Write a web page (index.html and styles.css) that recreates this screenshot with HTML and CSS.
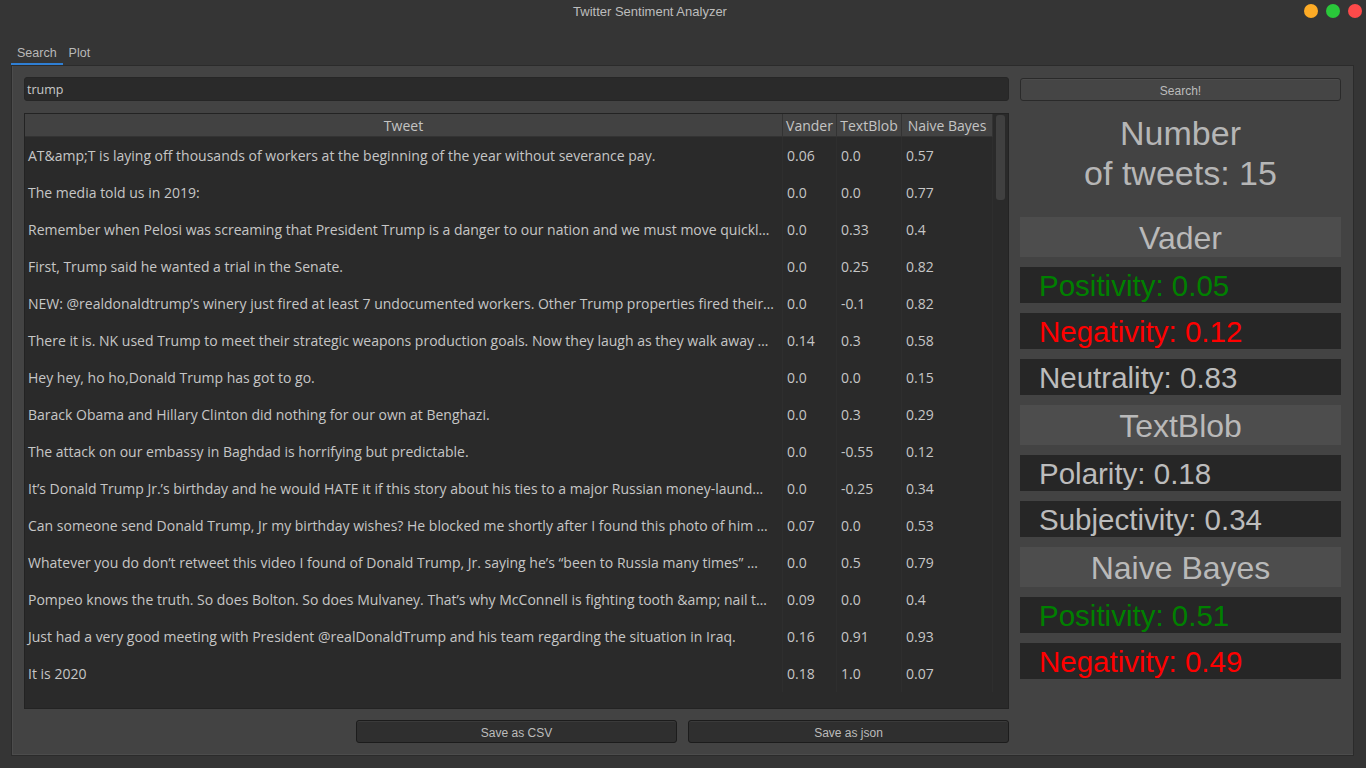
FILE: index.html
```html
<!DOCTYPE html>
<html>
<head>
<meta charset="utf-8">
<title>Twitter Sentiment Analyzer</title>
<link rel="stylesheet" href="styles.css">
</head>
<body>
<div class="window">
  <div class="titlebar">
    <div class="title">Twitter Sentiment Analyzer</div>
    <div class="lights">
      <span class="light yellow"></span>
      <span class="light green"></span>
      <span class="light red"></span>
    </div>
  </div>
  <div class="tabs">
    <div class="tab active">Search</div>
    <div class="tab">Plot</div>
  </div>
  <div class="pane">
    <div class="search-input">trump</div>
    <div class="btn search-btn">Search!</div>

    <div class="table">
      <div class="grid">
        <div class="row head">
          <div class="cell">Tweet</div>
          <div class="cell">Vander</div>
          <div class="cell">TextBlob</div>
          <div class="cell">Naive Bayes</div>
        </div>
        <div class="row"><div class="cell">AT&amp;amp;T is laying off thousands of workers at the beginning of the year without severance pay.</div><div class="cell">0.06</div><div class="cell">0.0</div><div class="cell">0.57</div></div>
        <div class="row"><div class="cell">The media told us in 2019:</div><div class="cell">0.0</div><div class="cell">0.0</div><div class="cell">0.77</div></div>
        <div class="row"><div class="cell">Remember when Pelosi was screaming that President Trump is a danger to our nation and we must move quickl…</div><div class="cell">0.0</div><div class="cell">0.33</div><div class="cell">0.4</div></div>
        <div class="row"><div class="cell">First, Trump said he wanted a trial in the Senate.</div><div class="cell">0.0</div><div class="cell">0.25</div><div class="cell">0.82</div></div>
        <div class="row"><div class="cell">NEW: @realdonaldtrump’s winery just fired at least 7 undocumented workers. Other Trump properties fired their…</div><div class="cell">0.0</div><div class="cell">-0.1</div><div class="cell">0.82</div></div>
        <div class="row"><div class="cell">There it is. NK used Trump to meet their strategic weapons production goals. Now they laugh as they walk away …</div><div class="cell">0.14</div><div class="cell">0.3</div><div class="cell">0.58</div></div>
        <div class="row"><div class="cell">Hey hey, ho ho,Donald Trump has got to go.</div><div class="cell">0.0</div><div class="cell">0.0</div><div class="cell">0.15</div></div>
        <div class="row"><div class="cell">Barack Obama and Hillary Clinton did nothing for our own at Benghazi.</div><div class="cell">0.0</div><div class="cell">0.3</div><div class="cell">0.29</div></div>
        <div class="row"><div class="cell">The attack on our embassy in Baghdad is horrifying but predictable.</div><div class="cell">0.0</div><div class="cell">-0.55</div><div class="cell">0.12</div></div>
        <div class="row"><div class="cell">It’s Donald Trump Jr.’s birthday and he would HATE it if this story about his ties to a major Russian money-laund…</div><div class="cell">0.0</div><div class="cell">-0.25</div><div class="cell">0.34</div></div>
        <div class="row"><div class="cell">Can someone send Donald Trump, Jr my birthday wishes? He blocked me shortly after I found this photo of him …</div><div class="cell">0.07</div><div class="cell">0.0</div><div class="cell">0.53</div></div>
        <div class="row"><div class="cell">Whatever you do don’t retweet this video I found of Donald Trump, Jr. saying he’s “been to Russia many times” …</div><div class="cell">0.0</div><div class="cell">0.5</div><div class="cell">0.79</div></div>
        <div class="row"><div class="cell">Pompeo knows the truth. So does Bolton. So does Mulvaney. That’s why McConnell is fighting tooth &amp;amp; nail t…</div><div class="cell">0.09</div><div class="cell">0.0</div><div class="cell">0.4</div></div>
        <div class="row"><div class="cell">Just had a very good meeting with President @realDonaldTrump and his team regarding the situation in Iraq.</div><div class="cell">0.16</div><div class="cell">0.91</div><div class="cell">0.93</div></div>
        <div class="row"><div class="cell">It is 2020</div><div class="cell">0.18</div><div class="cell">1.0</div><div class="cell">0.07</div></div>
      </div>
      <div class="vscroll"><div class="thumb"></div></div>
    </div>

    <div class="stats">
      <div class="count">Number<br>of tweets: 15</div>
      <div class="sect">Vader</div>
      <div class="val pos">Positivity: 0.05</div>
      <div class="val neg">Negativity: 0.12</div>
      <div class="val">Neutrality: 0.83</div>
      <div class="sect">TextBlob</div>
      <div class="val">Polarity: 0.18</div>
      <div class="val">Subjectivity: 0.34</div>
      <div class="sect">Naive Bayes</div>
      <div class="val pos">Positivity: 0.51</div>
      <div class="val neg">Negativity: 0.49</div>
    </div>

    <div class="btn dark csv">Save as CSV</div>
    <div class="btn dark json">Save as json</div>
  </div>
</div>
</body>
</html>
```

FILE: styles.css
```css
* { box-sizing: border-box; }
html, body {
  margin: 0;
  padding: 0;
  width: 1366px;
  height: 768px;
  overflow: hidden;
  background: #353535;
  font-family: "Liberation Sans", Arial, sans-serif;
}
.window {
  width: 1366px;
  height: 768px;
  display: flex;
  flex-direction: column;
}
.titlebar {
  height: 43px;
  position: relative;
}
.title {
  text-align: center;
  padding-right: 66px;
  line-height: 24px;
  font-size: 13px;
  color: #bdbdbd;
}
.lights {
  position: absolute;
  top: 4px;
  right: 4px;
  display: flex;
  gap: 8px;
}
.light {
  width: 14px;
  height: 14px;
  border-radius: 50%;
  display: block;
}
.yellow { background: #fdab26; }
.green { background: #2ac83a; }
.red { background: #fd4a4a; }

.tabs {
  height: 22px;
  display: flex;
  padding-left: 11px;
}
.tab {
  padding: 0 6px;
  font-size: 12.5px;
  line-height: 20px;
  color: #b9b9b9;
}
.tab.active {
  border-bottom: 2px solid #2f7fd4;
}
.pane {
  margin-left: 11px;
  width: 1343px;
  height: 691px;
  background: #434343;
  border: 1px solid #2b2b2b;
  box-shadow: inset 1px 0 0 #4c4c4c, inset 0 -1px 0 #4c4c4c;
  padding: 11px 12px 11px 12px;
  display: grid;
  grid-template-columns: repeat(4, 321px);
  grid-template-rows: 25px 596px 23px;
  column-gap: 11px;
  row-gap: 11px;
}
.search-input {
  grid-column: 1 / 4;
  grid-row: 1;
  height: 24px;
  background: #2a2a2a;
  border: 1px solid #262626;
  border-radius: 3px;
  padding-left: 2px;
  font-family: "Open Sans", sans-serif;
  font-size: 12.5px;
  line-height: 24px;
  color: #c8c8c8;
}
.btn {
  border-radius: 3px;
  text-align: center;
  font-size: 12px;
  color: #bcbcbc;
  line-height: 24px;
}
.search-btn {
  grid-column: 4;
  grid-row: 1;
  margin-top: 1px;
  height: 23px;
  background: #454545;
  border: 1px solid #2a2a2a;
  box-shadow: inset 0 1px 0 #4c4c4c;
}
.btn.dark {
  grid-row: 3;
  height: 23px;
  background: #2f2f2f;
  border: 1px solid #1c1c1c;
  box-shadow: inset 0 1px 0 #3a3a3a;
}
.csv { grid-column: 2; }
.json { grid-column: 3; }

.table {
  grid-column: 1 / 4;
  grid-row: 2;
  background: #2a2a2a;
  border: 1px solid #232323;
  display: flex;
  overflow: hidden;
}
.grid {
  width: 968px;
  display: flex;
  flex-direction: column;
}
.row {
  display: grid;
  grid-template-columns: 758px 54px 65px 91px;
  height: 37px;
  font-family: "Open Sans", sans-serif;
  font-size: 14px;
  color: #c6c6c6;
}
.row .cell {
  line-height: 38px;
  padding-left: 4px;
  white-space: nowrap;
  overflow: hidden;
  text-overflow: ellipsis;
  border-right: 1px solid #2e2e2e;
}
.row .cell:first-child { padding-left: 3px; }
.row.head {
  height: 23px;
}
.row.head .cell {
  background: #424242;
  line-height: 23px;
  text-align: center;
  padding: 0;
  font-size: 14px;
  color: #c4c4c4;
  border-right: 1px solid #333333;
  border-bottom: 1px solid #333333;
  text-overflow: clip;
}
.vscroll {
  width: 16px;
  padding: 1px 3px 0 3px;
}
.thumb {
  height: 85px;
  background: #404040;
  border-radius: 3px;
}

.stats {
  grid-column: 4;
  grid-row: 2 / 4;
  display: flex;
  flex-direction: column;
  gap: 10px;
}
.count {
  font-size: 34px;
  line-height: 40px;
  text-align: center;
  color: #b6b6b6;
  margin-bottom: 14px;
}
.sect {
  height: 40px;
  background: #4d4d4d;
  text-align: center;
  font-size: 32px;
  line-height: 42px;
  color: #b9b9b9;
}
.val {
  height: 36px;
  background: #262626;
  padding-left: 19px;
  font-size: 29.5px;
  line-height: 38px;
  color: #bcbcbc;
}
.val.pos { color: #008000; }
.val.neg { color: #ff0000; }
```
